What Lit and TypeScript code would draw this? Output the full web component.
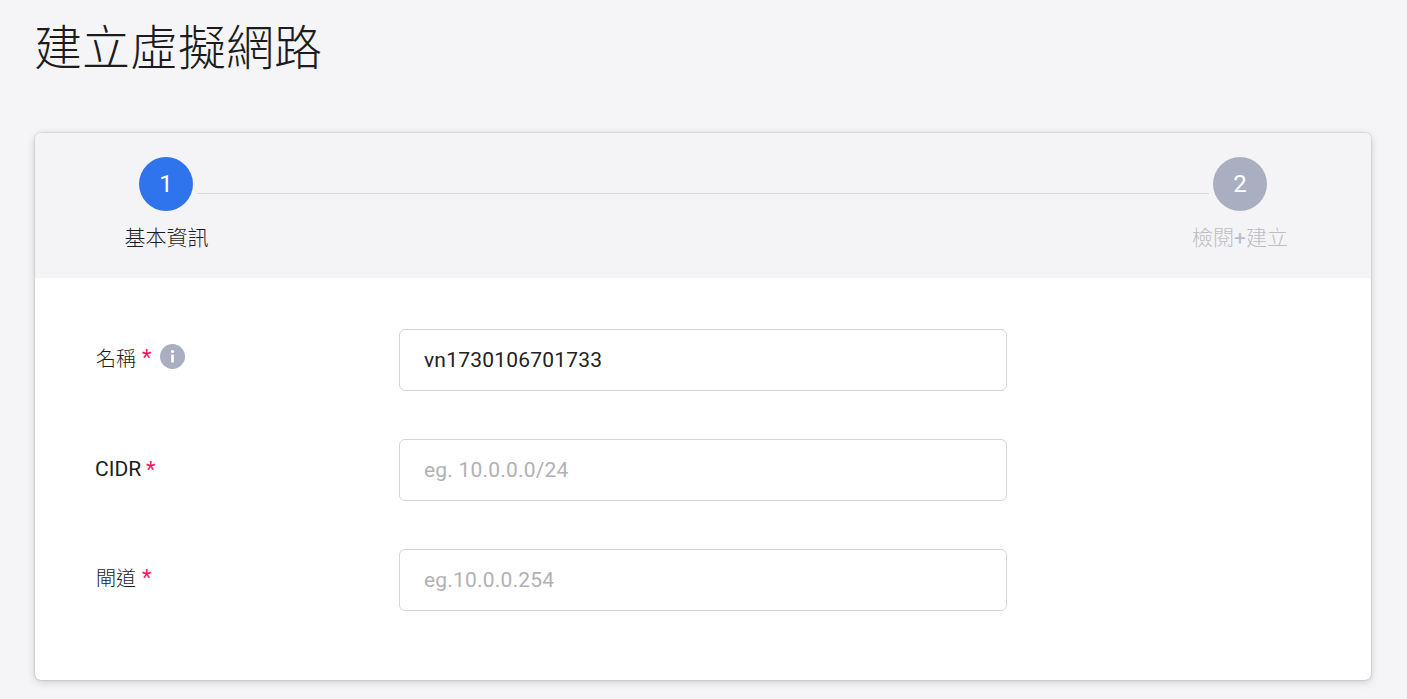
import { LitElement, html, css } from "lit";
import { customElement } from "lit/decorators.js";

@customElement("app-root")
export class AppRoot extends LitElement {
  static styles = css`
    :host {
      display: block;
      height: 699px;
      overflow: hidden;
      background: #f5f5f8;
      font-family: Roboto, "Noto Sans CJK TC", sans-serif;
      color: #1c1c1c;
    }
    .page { padding: 0 36px 0 35px; }
    h1 {
      margin: 0 0 0 -1px;
      padding-top: 15px;
      height: 133px;
      box-sizing: border-box;
      font-size: 48px;
      line-height: 58px;
      font-weight: 300;
      font-family: "Noto Sans CJK TC", sans-serif;
    }
    .card {
      height: 547px;
      box-sizing: border-box;
      border-radius: 6px;
      background: #fff;
      box-shadow: 0 0 2px rgba(0,0,0,.28), 0 2px 8px rgba(0,0,0,.17);
      overflow: hidden;
    }
    .steps {
      height: 145px;
      box-sizing: border-box;
      background: #f4f4f7;
      padding: 24px 81px 0 88px;
      display: flex;
      align-items: flex-start;
    }
    .step {
      width: 86px;
      flex: none;
      display: flex;
      flex-direction: column;
      align-items: center;
      gap: 12px;
    }
    .step.second { width: 100px; }
    .circle {
      width: 54px;
      height: 54px;
      border-radius: 50%;
      display: flex;
      align-items: center;
      justify-content: center;
      color: #fff;
      font-size: 24px;
      background: #2f73ed;
    }
    .second .circle { background: #a9afc1; }
    .step-label {
      font-size: 21px;
      line-height: 30px;
      font-weight: 300;
      white-space: nowrap;
      padding-left: 1px;
    }
    .second .step-label { color: #bcbcc4; padding-left: 0; }
    .plus { font-weight: 400; }
    .line {
      flex: 1;
      height: 1px;
      background: #d9d9de;
      margin: 36px -19px 0 -12px;
    }
    form { padding: 51px 0 0 61px; display: flex; flex-direction: column; gap: 48px; }
    .row { display: flex; align-items: flex-start; }
    .label {
      width: 303px;
      flex: none;
      display: flex;
      align-items: center;
      gap: 6px;
      height: 56px;
      font-size: 20px;
      font-weight: 300;
      white-space: nowrap;
    }
    .latin {
      height: 60px;
      font-size: 21px;
      font-weight: 400;
      gap: 5px;
      margin-left: -1px;
      width: 304px;
    }
    .star { color: #fb1464; font-weight: 400; font-size: 22px; }
    .info {
      width: 25px;
      height: 25px;
      margin-left: 3px;
      margin-top: -1px;
      display: block;
    }
    input {
      width: 608px;
      height: 62px;
      box-sizing: border-box;
      border: 1px solid #d4d4d8;
      border-radius: 6px;
      padding: 0 24px;
      font: 400 21px Roboto, sans-serif;
      letter-spacing: 0.2px;
      color: #222;
      background: #fff;
      outline: none;
    }
    input::placeholder { color: #b1b1b5; opacity: 1; }
  `;

  render() {
    return html`
      <div class="page">
        <h1>建立虛擬網路</h1>
        <div class="card">
          <div class="steps">
            <div class="step">
              <div class="circle">1</div>
              <div class="step-label">基本資訊</div>
            </div>
            <div class="line"></div>
            <div class="step second">
              <div class="circle">2</div>
              <div class="step-label">檢閱<span class="plus">+</span>建立</div>
            </div>
          </div>
          <form>
            <div class="row">
              <div class="label">
                <span>名稱</span><span class="star">*</span>
                <svg class="info" viewBox="0 0 25 25" aria-hidden="true">
                  <circle cx="12.5" cy="12.5" r="12.5" fill="#a9afc1"></circle>
                  <circle cx="12.5" cy="7.5" r="1.6" fill="#fff"></circle>
                  <rect x="11.2" y="10.5" width="2.6" height="8" rx="0.6" fill="#fff"></rect>
                </svg>
              </div>
              <input value="vn1730106701733" />
            </div>
            <div class="row">
              <div class="label latin"><span>CIDR</span><span class="star">*</span></div>
              <input placeholder="eg. 10.0.0.0/24" />
            </div>
            <div class="row">
              <div class="label"><span>閘道</span><span class="star">*</span></div>
              <input placeholder="eg.10.0.0.254" />
            </div>
          </form>
        </div>
      </div>
    `;
  }
}
